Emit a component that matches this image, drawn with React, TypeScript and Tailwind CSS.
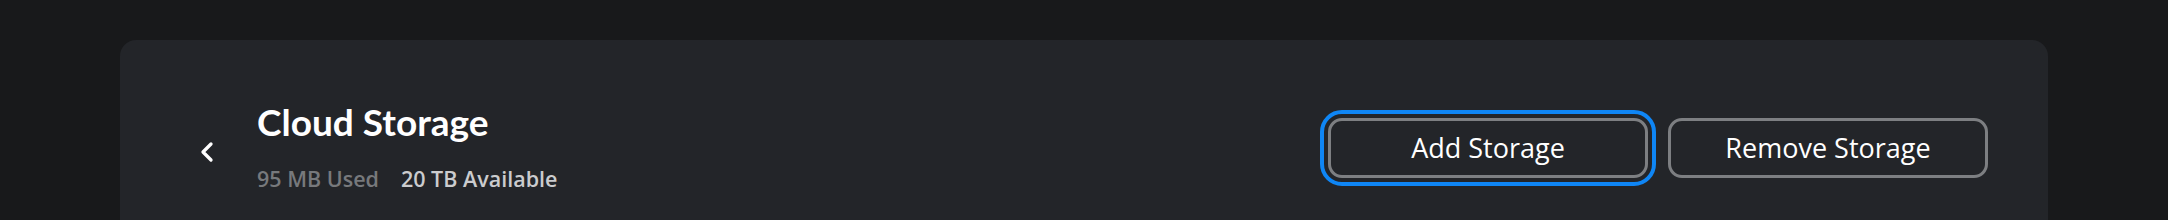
import { ChevronLeft } from 'lucide-react'

export default function App() {
  return (
    <div className="min-h-[220px] bg-[#18191b] px-[120px] pt-[40px]">
      <div className="flex h-[240px] items-start justify-between rounded-t-[16px] bg-[#232529] pl-[80px] pr-[60px] pt-[60px]">
        <div className="flex items-center">
          <ChevronLeft className="mt-[10px] h-[32px] w-[32px] -ml-[9px] text-white" strokeWidth={2.5} />
          <div className="ml-[34px] flex flex-col">
            <h1 className="font-['Lato',sans-serif] text-[37px] font-bold leading-[44px] text-white">
              Cloud Storage
            </h1>
            <div className="mt-[20px] flex gap-[22px] font-['Open_Sans',sans-serif] text-[21.5px] font-semibold leading-[30px]">
              <span className="text-[#77797c]">95 MB Used</span>
              <span className="text-[#cbccce]">20 TB Available</span>
            </div>
          </div>
        </div>
        <div className="mt-[18px] flex gap-[20px] font-['Open_Sans',sans-serif] text-[27px] font-medium text-white">
          <button className="h-[60px] w-[320px] rounded-[14px] border-[3px] border-[#7d7f82] outline-[4px] outline-offset-[4px] outline-[#0f86f5] outline-solid">
            Add Storage
          </button>
          <button className="h-[60px] w-[320px] rounded-[14px] border-[3px] border-[#7d7f82]">
            Remove Storage
          </button>
        </div>
      </div>
    </div>
  )
}
